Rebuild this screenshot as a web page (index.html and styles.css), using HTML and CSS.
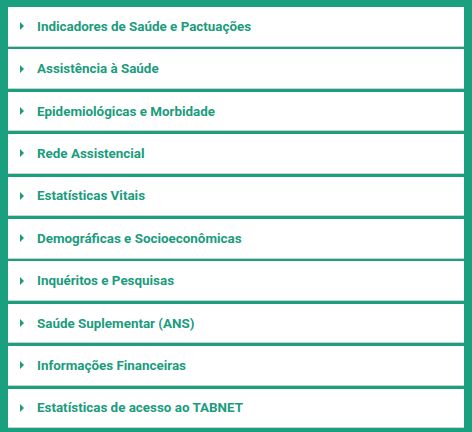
FILE: index.html
```html
<!DOCTYPE html>
<html lang="pt-BR">
<head>
    <meta charset="UTF-8">
    <title>TABNET</title>
    <link rel="stylesheet" href="styles.css">
</head>
<body>
    <ul class="menu">
        <li class="menu-item"><span class="caret"></span>Indicadores de Saúde e Pactuações</li>
        <li class="menu-item"><span class="caret"></span>Assistência à Saúde</li>
        <li class="menu-item"><span class="caret"></span>Epidemiológicas e Morbidade</li>
        <li class="menu-item"><span class="caret"></span>Rede Assistencial</li>
        <li class="menu-item"><span class="caret"></span>Estatísticas Vitais</li>
        <li class="menu-item"><span class="caret"></span>Demográficas e Socioeconômicas</li>
        <li class="menu-item"><span class="caret"></span>Inquéritos e Pesquisas</li>
        <li class="menu-item"><span class="caret"></span>Saúde Suplementar (ANS)</li>
        <li class="menu-item"><span class="caret"></span>Informações Financeiras</li>
        <li class="menu-item"><span class="caret"></span>Estatísticas de acesso ao TABNET</li>
    </ul>
</body>
</html>
```

FILE: styles.css
```css
body {
    margin: 0;
    background-color: #1ba07f;
    font-family: Roboto, "Liberation Sans", sans-serif;
}
.menu {
    list-style: none;
    margin: 0;
    padding: 7px 8px 4px 8px;
    display: flex;
    flex-direction: column;
    gap: 2.8px;
}
.menu-item {
    display: flex;
    align-items: center;
    height: 38.6px;
    padding-left: 12px;
    background-color: #fff;
    border-bottom: 1px solid #c9d3d0;
    color: #1a9c7d;
    font-size: 13.4px;
    font-weight: 700;
}
.caret {
    width: 0;
    height: 0;
    border-top: 4px solid transparent;
    border-bottom: 4px solid transparent;
    border-left: 4px solid #1a9c7d;
    margin-right: 13px;
}
```
